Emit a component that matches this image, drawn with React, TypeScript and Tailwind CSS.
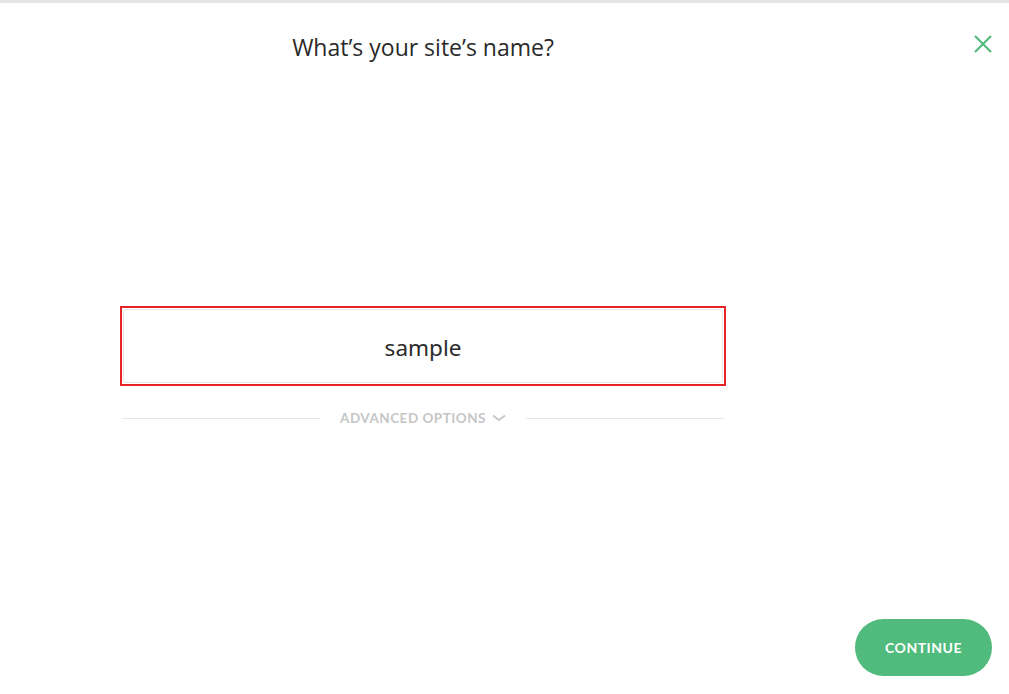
import React from "react";

export default function App() {
  return (
    <div className="relative h-[694px] w-full bg-white border-t-[3px] border-[#e5e5e5] overflow-hidden" style={{ fontFamily: "'Open Sans', sans-serif" }}>
      <button className="absolute right-[17px] top-[32px] w-[18px] h-[18px] flex items-center justify-center">
        <svg width="18" height="18" viewBox="0 0 18 18" fill="none">
          <path d="M1 1L17 17M17 1L1 17" stroke="#4fba7a" strokeWidth="2" />
        </svg>
      </button>
      <div className="ml-[120px] w-[606px] flex flex-col">
        <h1 className="mt-[29px] h-[30px] text-center text-[23px] leading-[30px] text-[#2a2a2a] font-normal" style={{ fontFamily: "'Open Sans', sans-serif" }}>
          What’s your site’s name?
        </h1>
        <div className="mt-[244px] h-[80px] border-2 border-[#e52525] p-[1px]">
          <div className="h-full rounded-[3px] border border-[#e6e6e6] flex items-center justify-center">
            <span className="text-[22.5px] text-[#2a2a2a] leading-none pt-[4px]" style={{ fontFamily: "'Noto Sans', sans-serif" }}>sample</span>
          </div>
        </div>
        <div className="mt-[22px] flex items-center px-[2px]">
          <div className="flex-1 h-px bg-[#e5e5e5]" />
          <div className="px-[20px] flex items-center gap-[6px] text-[13.5px] font-bold tracking-[0.5px] text-[#c6c6c6]" style={{ fontFamily: "Lato, sans-serif" }}>
            <span>ADVANCED OPTIONS</span>
            <svg width="14" height="8" viewBox="0 0 14 8" fill="none">
              <path d="M1 1.5L7 6L13 1.5" stroke="#c6c6c6" strokeWidth="1.8" />
            </svg>
          </div>
          <div className="flex-1 h-px bg-[#e5e5e5]" />
        </div>
      </div>
      <button className="absolute right-[17px] bottom-[18px] w-[137px] h-[57px] rounded-full bg-[#50bb7c] text-white text-[14px] font-bold tracking-[0.5px]" style={{ fontFamily: "Lato, sans-serif" }}>
        CONTINUE
      </button>
    </div>
  );
}
